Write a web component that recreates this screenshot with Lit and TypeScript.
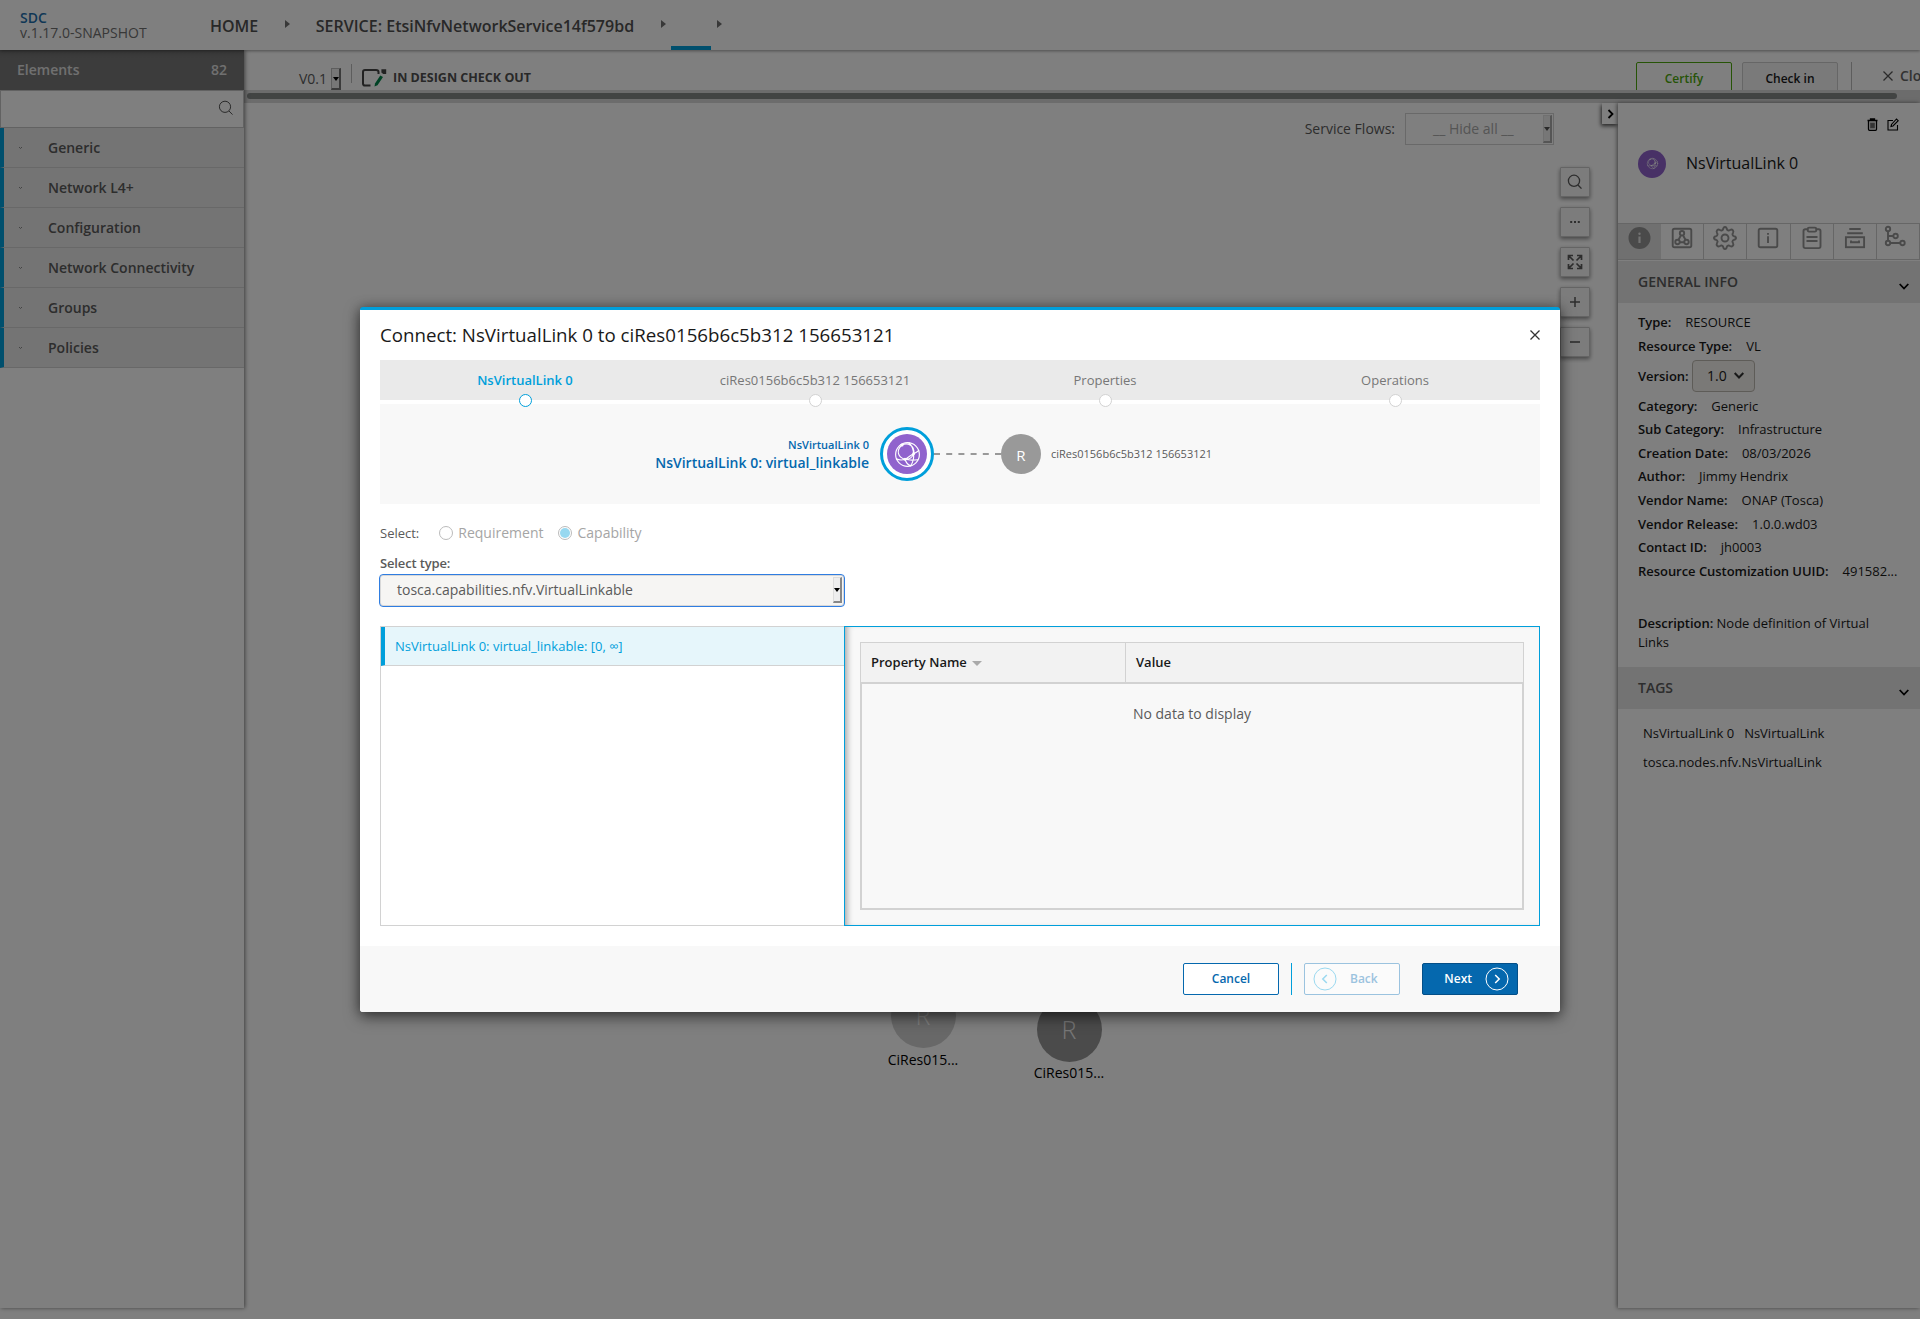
import { LitElement, html, css, svg } from "lit";
import { customElement } from "lit/decorators.js";

const categories = ["Generic", "Network L4+", "Configuration", "Network Connectivity", "Groups", "Policies"];

const details: [string, string][] = [
  ["Category:", "Generic"],
  ["Sub Category:", "Infrastructure"],
  ["Creation Date:", "08/03/2026"],
  ["Author:", "Jimmy Hendrix"],
  ["Vendor Name:", "ONAP (Tosca)"],
  ["Vendor Release:", "1.0.0.wd03"],
  ["Contact ID:", "jh0003"],
  ["Resource Customization UUID:", "491582..."],
];

const steps = ["NsVirtualLink 0", "ciRes0156b6c5b312 156653121", "Properties", "Operations"];

const globe = svg`<g fill="none" stroke="#fff" stroke-width="1.100" stroke-linecap="round">
  <circle cx="12" cy="12" r="11.400"/>
  <path d="M6.700 2.900C12 0 19.500 3.500 17.900 11.200C16.500 15.500 13 16.800 9.600 16.600M6.700 2.900C.500 8.500 3 15 9.600 16.600M1.300 16.200C4 17.500 7 17.500 9.600 16.600M9.600 16.600C13 17.500 18 17.500 22 17M9.600 16.600C10.500 19.500 12.500 22 15 22.900M17.900 11.200C18.300 16 17 20 15 22.900M17.900 11.200C17.500 6.500 16 3 13.500.900M17.900 11.200C19.500 10.500 21.500 9.300 22.800 8.200M9.600 16.600C13 14.500 15.500 12.500 17.900 11.200"/>
</g><g fill="#fff"><circle cx="6.700" cy="2.900" r="1.500"/><circle cx="9.600" cy="16.600" r="1.500"/><circle cx="17.900" cy="11.200" r="1.400"/></g>`;

const tabIcons = [
  svg`<circle cx="11.500" cy="12" r="11" fill="#949494" stroke="none"/><path d="M11.500 10.500v6.500" stroke="#e6e6e6" stroke-width="2.200"/><circle cx="11.500" cy="7.700" r="1.200" fill="#e6e6e6" stroke="none"/>`,
  svg`<rect x="2.700" y="2.700" width="18.600" height="18.600" rx="1.800"/><circle cx="12" cy="7.200" r="2.200"/><circle cx="7.500" cy="16" r="2.200"/><circle cx="16.500" cy="16" r="2.200"/><path d="M11 9.300 8.400 14M13 9.300l2.600 4.700M9.700 16.200h4.600"/>`,
  svg`<circle cx="12" cy="12" r="3.500"/><path d="M10.200 3.100C10.600.300 13.400.300 13.800 3.100Q14.100 4.300 15.300 4.500Q16 4.700 17.100 4C19.200 2.800 21.200 4.800 20 6.900Q19.300 8 19.500 8.700Q19.700 9.900 20.900 10.200C23.700 10.600 23.700 13.400 20.900 13.800Q19.700 14.100 19.500 15.300Q19.300 16 20 17.100C21.200 19.200 19.200 21.200 17.100 20Q16 19.300 15.300 19.500Q14.100 19.700 13.800 20.900C13.400 23.700 10.600 23.700 10.200 20.900Q9.900 19.700 8.700 19.500Q8 19.300 6.900 20C4.800 21.200 2.800 19.200 4 17.100Q4.700 16 4.500 15.300Q4.300 14.100 3.100 13.800C.300 13.400.300 10.600 3.100 10.200Q4.300 9.900 4.500 8.700Q4.700 8 4 6.900C2.800 4.800 4.800 2.800 6.900 4Q8 4.700 8.700 4.500Q9.900 4.300 10.200 3.100Z"/>`,
  svg`<rect x="2.700" y="2.700" width="18.600" height="18.600" rx="1.800"/><path d="M12 10.200v6.800M12 7v1.700"/>`,
  svg`<path d="M8 3.300H5.300a1.800 1.800 0 0 0-1.800 1.800v15.200a1.800 1.800 0 0 0 1.800 1.800h13.400a1.800 1.800 0 0 0 1.800-1.800V5.100a1.800 1.800 0 0 0-1.800-1.800H16"/><rect x="7.800" y="1.600" width="8.400" height="4" rx="1.200"/><path d="M6.500 11h11M6.500 15h11"/>`,
  svg`<path d="M6.300 3h11.400M4.200 7.200h15.600"/><rect x="2.900" y="11.200" width="18.200" height="10"/><path d="M8 14.500v1.800h8v-1.800"/>`,
  svg`<circle cx="5" cy="3" r="2.200"/><circle cx="12.600" cy="10" r="2.200"/><circle cx="5" cy="17" r="2.200"/><circle cx="19.500" cy="17" r="2.200"/><path d="M5 5.200v9.600M5 10h5.400M7.200 17h10"/>`,
];

const search = svg`<circle cx="7" cy="6.800" r="5.600"/><path d="M11 11l3.500 3.600"/>`;
const toolIcons = [
  svg`<g stroke-width="1.300">${search}</g>`,
  svg`<path d="M3.200 8h2M7 8h2M10.800 8h2" stroke-width="2"/>`,
  svg`<path d="M1.500 6V1.500H6M10 1.500h4.500V6M14.500 10v4.500H10M6 14.500H1.500V10M2 2l4.500 4.500M14 2 9.500 6.500M14 14 9.500 9.500M2 14l4.500-4.500" stroke-width="1.700"/>`,
  svg`<path d="M8 3v10M3 8h10" stroke-width="1.500"/>`,
  svg`<path d="M3 8h10" stroke-width="1.600"/>`,
];

@customElement("app-root")
export class AppRoot extends LitElement {
  static styles = css`
    :host { display: block; position: relative; width: 1920px; height: 1319px; overflow: hidden; background: #fff; color: #191919; font: 400 14px/20px "Open Sans", "Noto Sans", sans-serif; }
    *, *::before { box-sizing: border-box; }
    svg { display: block; flex: none; overflow: visible; }
    .page { display: flex; flex-direction: column; height: 1308px; }
    .top { height: 50px; flex: none; display: flex; position: relative; z-index: 3; background: #fff; box-shadow: 0 1px 3px rgba(0,0,0,.4); color: #5a5a5a; }
    .brand { width: 190px; padding: 10px 0 0 20px; line-height: 15px; font-size: 14px; font-weight: 500; color: #707070; }
    .brand b { display: block; font-weight: 600; color: #1e6fad; }
    .crumbs { display: flex; align-items: center; font-size: 16px; font-weight: 600; padding: 2px 0 0 20px; color: #505050; }
    .crumbs i { width: 0; height: 0; border: 4.500px solid transparent; border-left: 5px solid #707070; border-right: 0; margin: 0 25.500px 4px 27px; }
    .crumbs u { width: 40px; height: 4px; background: #009fdb; align-self: flex-end; margin-left: -20.500px; }
    .crumbs u + i { margin-left: 6px; }
    .main { flex: 1; min-height: 0; display: flex; }
    .palette { width: 244px; flex: none; position: relative; z-index: 2; box-shadow: 1px 0 4px rgba(0,0,0,.5); }
    .phead { height: 40px; background: linear-gradient(#6e6e6e,#787878 8px); display: flex; justify-content: space-between; padding: 10px 17px; color: #e0e0e0; font-weight: 600; }
    .find { height: 38px; border: 1px solid #c4c4c4; display: flex; justify-content: flex-end; padding: 9px 9px; }
    .find svg, .tool svg { fill: none; stroke: #555; }
    .cat { height: 40px; display: flex; align-items: center; gap: 25px; padding-left: 14px; border-left: 4px solid #009fdb; border-bottom: 1px solid #d0d0d0; background: #e8e8e8; font-weight: 600; color: #5a5a5a; }
    .cat svg { fill: none; stroke: #888; }
    .work { flex: 1; min-width: 0; display: flex; flex-direction: column; }
    .bar { height: 40px; flex: none; overflow: hidden; display: flex; align-items: flex-start; padding-left: 55px; }
    .ver { display: flex; align-items: center; height: 22px; margin-top: 18px; gap: 4px; color: #5a5a5a; }
    .spin { width: 10px; align-self: stretch; background: #eee; border: 1px solid #bbb; border-right: 2px solid #777; border-bottom: 2px solid #777; display: grid; place-items: center; }
    .spin::before { content: ""; border: 3px solid transparent; border-top: 4px solid #000; border-bottom: 0; }
    .sep { width: 1px; height: 19px; margin: 14px 10px 0 10px; background: #bbb; }
    .state { display: flex; align-items: center; gap: 6px; font-size: 12.500px; font-weight: 700; color: #505050; margin-top: 18px; height: 20px; }
    .acts { margin-left: auto; display: flex; width: 284px; }
    .act { flex: none; width: 96px; height: 32px; margin: 12px 10px 0 0; border: 1px solid #ccc; border-radius: 2px; background: #f4f4f4; font-size: 12px; font-weight: 600; text-align: center; line-height: 31px; }
    .act.ok { border-color: #4ca90c; color: #4ca90c; background: #fff; }
    .exit { display: flex; flex: none; align-items: center; gap: 7px; height: 30px; margin: 12px 0 0 3px; padding: 0 0 2px 31px; border-left: 1px solid #bbb; color: #666; font-weight: 600; }
    .track { height: 13px; flex: none; background: #d8d8d8; padding: 3px 23px 0 3px; }
    .track div { height: 6px; border-radius: 3px; background: #848887; }
    .split { flex: 1; min-height: 0; display: flex; }
    .canvas { flex: 1; position: relative; }
    .flows { display: flex; align-items: center; justify-content: flex-end; padding: 10px 64px 0 0; gap: 10px; color: #5a5a5a; }
    .hide { width: 149px; height: 32px; border: 1px solid #d2d2d2; display: flex; justify-content: space-between; align-items: center; padding: 1px 1px 1px 27px; color: #aaa; }
    .flows .spin { width: 9px; border-color: #e0e0e0 #aaa #aaa #e0e0e0; }
    .flows .spin::before { border-top-color: #555; }
    .tools { position: absolute; top: 64px; left: 1316px; display: grid; gap: 10px; }
    .tool { width: 30px; height: 30px; display: grid; place-items: center; border: 1px solid #c8c8c8; border-radius: 1px; background: #f8f8f8; box-shadow: 0 2px 4px rgba(0,0,0,.45); }
    .tool svg { stroke: #5a5a5a; }
    .fold { position: absolute; top: 0; right: 0; width: 16px; height: 21px; background: #fff; box-shadow: -1px 2px 4px rgba(0,0,0,.7); display: grid; place-items: center; }
    .fold svg, .chev { fill: none; stroke: #000; stroke-width: 1.800; }
    .node { position: absolute; width: 120px; text-align: center; color: #000; font-size: 14px; top: 880px; left: 619px; }
    .node.b { left: 765px; top: 893.500px; }
    .node span { display: block; width: 65px; height: 65px; border-radius: 50%; background: #d0d0d0; color: #fff; margin: 0 auto 1.500px; line-height: 65px; font-size: 25px; font-weight: 300; }
    .node.b span { background: #969696; color: #eee; }
    .info { width: 302px; flex: none; position: relative; z-index: 1; background: #fff; box-shadow: -1px 0 4px rgba(0,0,0,.5); font-size: 13px; line-height: 18.570px; }
    .icons { display: flex; justify-content: flex-end; gap: 9px; padding: 15px 21px 0 0; height: 39px; }
    .icons svg { fill: none; stroke: #000; stroke-width: 1.300; }
    .who { display: flex; align-items: center; gap: 20px; height: 81px; padding: 0 0 38px 20px; font-size: 16px; }
    .badge { width: 28px; height: 28px; border-radius: 50%; background: #9063cd; display: grid; place-items: center; }
    .tabs { display: grid; grid-template-columns: repeat(7, 1fr); height: 37px; border-top: 1px solid #ccc; border-bottom: 1px solid #ccc; }
    .tab { border-right: 1px solid #ccc; display: flex; justify-content: center; padding-top: 2px; }
    .tab svg { fill: none; stroke: #949494; stroke-width: 1.900; }
    .tab:first-child { background: #e0e0e0; border: 0; }
    .tab:last-child { padding-right: 6px; }
    .sect { height: 42px; display: flex; align-items: center; justify-content: space-between; background: #e6e6e6; padding: 0 11px 0 20px; font-size: 14px; font-weight: 600; color: #5a5a5a; }
    .sect.first { margin-top: 1px; }
    .sect .chev { margin-top: 8px; }
    .list { padding: 7.500px 20px 0; height: 364px; }
    .row { height: 23.620px; display: flex; align-items: center; gap: 14px; }
    .row b, .desc b { font-weight: 600; letter-spacing: -.04px; }
    .row.v { height: 36.400px; gap: 3.500px; }
    .pick { width: 63px; height: 32px; border: 1px solid #bcb8b0; border-radius: 4px; background: #f5f3ef; display: flex; align-items: center; gap: 7px; padding-left: 14px; font-size: 14px; }
    .pick .chev { stroke: #333; stroke-width: 2; }
    .desc { margin: 31.400px 0 0; width: 245px; line-height: 18.570px; }
    .tags { padding: 10px 25px; display: flex; flex-wrap: wrap; gap: 0 10px; line-height: 29px; }
    .veil { position: absolute; inset: 0; z-index: 10; background: rgba(0,0,0,.5); }
    .modal { position: absolute; z-index: 11; left: 360px; top: 307px; width: 1200px; height: 705px; display: flex; flex-direction: column; border-top: 3px solid #009fdb; border-radius: 3px; background: #fff; box-shadow: 0 5px 15px rgba(0,0,0,.5), 0 0 12px rgba(0,0,0,.3); }
    .title { height: 50px; flex: none; display: flex; align-items: center; justify-content: space-between; padding: 0 20px; font-size: 18.720px; font-weight: 500; }
    .steps { display: grid; grid-template-columns: repeat(4, 1fr); height: 44px; flex: none; margin: 0 20px; background: #eaeaea; border-bottom: 4px solid #fff; font-size: 13px; color: #777; position: relative; }
    .step { display: flex; flex-direction: column; align-items: center; padding-top: 10px; gap: 4px; height: 47px; }
    .step i { width: 13px; height: 13px; border: 1px solid #d2d2d2; border-radius: 50%; background: #fff; flex: none; }
    .step.on { color: #009fdb; font-weight: 600; }
    .step.on i { border: 1.500px solid #009fdb; }
    .link { height: 100px; flex: none; margin: 0 20px; background: #f8f8f8; display: flex; align-items: center; font-size: 11px; font-weight: 500; color: #5a5a5a; }
    .from { width: 489px; text-align: right; color: #0568ae; font-weight: 600; line-height: 18px; padding-bottom: 1px; }
    .from b { display: block; font-size: 14px; font-weight: 600; }
    .ring { width: 54px; height: 54px; margin-left: 11px; border: 3px solid #009fdb; border-radius: 50%; background: #fff; display: grid; place-items: center; }
    .ring .badge { width: 40px; height: 40px; }
    .r { width: 40px; height: 40px; border-radius: 50%; background: #999; color: #fff; display: grid; place-items: center; font-size: 15px; font-weight: 400; margin-right: 10px; padding-top: 1px; }
    .choose { display: flex; align-items: center; margin: 19px 20px 0; height: 20px; font-size: 13px; color: #5a5a5a; }
    .radio { display: flex; align-items: center; gap: 5px; font-size: 14px; color: #a5a5a5; margin-left: 20px; }
    .radio + .radio { margin-left: 15px; }
    .radio i { width: 14px; height: 14px; border: 1px solid #bbb; border-radius: 50%; padding: 1px; }
    .radio i::before { content: ""; display: block; width: 10px; height: 10px; border-radius: 50%; }
    .radio.on i::before { background: #97d8f0; }
    .lbl { margin: 10px 20px 0; font-size: 13px; font-weight: 600; letter-spacing: -.15px; color: #5a5a5a; }
    .sel { width: 466px; height: 33px; flex: none; margin: 1px 0 0 19px; border: 1px solid #2f7de1; border-radius: 4px; background: #f6f5f3; box-shadow: inset 0 0 0 1px #d8d8d8; display: flex; justify-content: space-between; align-items: center; padding: 2px 2px 3px 17px; color: #5a5a5a; }
    .sel .spin { width: 9px; border-color: #ddd #888 #888 #ddd; }
    .panes { display: flex; height: 300px; flex: none; margin: 19px 20px 0; }
    .left { width: 464px; border: 1px solid #d2d2d2; border-right: 0; }
    .item { height: 39px; display: flex; align-items: center; padding-left: 10px; border-left: 4px solid #009fdb; border-bottom: 1px solid #d2d2d2; background: #e6f6fb; color: #009fdb; font-size: 13px; }
    .right { flex: 1; border: 1px solid #009fdb; background: #f8f8f8; padding: 15px; box-shadow: inset 6px 0 6px -4px rgba(0,0,0,.35); }
    .thead { display: flex; height: 40px; border: 1px solid #d2d2d2; border-bottom: 0; background: #f2f2f2; font-size: 13px; font-weight: 600; line-height: 37px; }
    .thead div { width: 265px; height: 39px; border-right: 1px solid #d2d2d2; padding: 0 0 1px 10px; display: flex; align-items: center; gap: 5px; }
    .thead div:last-child { border: 0; }
    .thead i { border: 5px solid transparent; border-top: 5px solid #aaa; border-bottom: 0; margin-top: 2px; }
    .tbody { height: 228px; border: 2px solid #d2d2d2; padding-top: 20px; text-align: center; color: #5a5a5a; }
    .foot { margin-top: auto; height: 66px; background: #f8f8f8; border-radius: 0 0 3px 3px; display: flex; align-items: center; justify-content: flex-end; padding-right: 42px; }
    .btn { width: 96px; height: 32px; border: 1px solid #0568ae; border-radius: 2px; background: #fff; display: flex; align-items: center; justify-content: center; font-size: 12px; font-weight: 600; color: #0568ae; }
    .btn svg { fill: none; stroke: currentColor; }
    .bsep { width: 1px; height: 32px; margin: 0 12px; background: #009fdb; }
    .back { border-color: #9bc3df; color: #9bc3df; background: #fbfbfb; justify-content: flex-start; padding-left: 8px; gap: 13px; }
    .back svg { color: #9bd9f0; }
    .next { margin-left: 22px; background: #0568ae; border-color: #044f88; color: #fff; gap: 13px; justify-content: flex-end; padding-right: 8px; }
  `;

  private chevron() {
    return html`<svg class="chev" width="10" height="7" viewBox="0 0 10 7"><path d="M.700 1 5 5.500 9.300 1"/></svg>`;
  }

  private cross(size: number, color: string) {
    return html`<svg width=${size} height=${size} viewBox="0 0 10 10" fill="none" stroke=${color} stroke-width="1.300"><path d="M.500.500l9 9M9.500.500l-9 9"/></svg>`;
  }

  private palette() {
    return html`<div class="palette">
      <div class="phead"><span>Elements</span><span>82</span></div>
      <div class="find"><svg width="16" height="16" viewBox="0 0 16 16">${search}</svg></div>
      ${categories.map(c => html`<div class="cat"><svg width="5" height="4" viewBox="0 0 5 4"><path d="M1 1l1.500 1.500L4 1"/></svg>${c}</div>`)}
    </div>`;
  }

  private info() {
    return html`<div class="info">
      <div class="icons">
        <svg width="11" height="13" viewBox="0 0 11 13"><path d="M.500 2.500h10M3.500 2.300V1h4v1.300M1.500 2.500v8.800q0 1 1 1h6q1 0 1-1V2.500"/><rect x="3.500" y="5" width="4" height="5" fill="#666" stroke="#777" stroke-width=".800"/></svg>
        <svg width="12" height="13" viewBox="0 0 12 13"><path d="M6 2.500H1v9.500h9.500V7M4 8.500l.500-2L9.500 1l1.700 1.700L6 8z" stroke-width="1.100"/></svg>
      </div>
      <div class="who"><span class="badge"><svg width="11" height="11" viewBox="0 0 24 24">${globe}</svg></span>NsVirtualLink 0</div>
      <div class="tabs">${tabIcons.map(t => html`<div class="tab"><svg width="24" height="24" viewBox="0 0 24 24">${t}</svg></div>`)}</div>
      <div class="sect first">GENERAL INFO${this.chevron()}</div>
      <div class="list">
        <div class="row"><b>Type:</b><span>RESOURCE</span></div>
        <div class="row"><b>Resource Type:</b><span>VL</span></div>
        <div class="row v"><b>Version:</b><span class="pick">1.0 ${this.chevron()}</span></div>
        ${details.map(([k, v]) => html`<div class="row"><b>${k}</b><span>${v}</span></div>`)}
        <div class="desc"><b>Description:</b> Node definition of Virtual Links</div>
      </div>
      <div class="sect">TAGS${this.chevron()}</div>
      <div class="tags"><span>NsVirtualLink 0</span><span>NsVirtualLink</span><span>tosca.nodes.nfv.NsVirtualLink</span></div>
    </div>`;
  }

  private modal() {
    return html`<div class="modal">
      <div class="title"><span>Connect: NsVirtualLink 0 to ciRes0156b6c5b312 156653121</span>${this.cross(10, "#333")}</div>
      <div class="steps">${steps.map((s, i) => html`<div class="step ${i === 0 ? "on" : ""}"><span>${s}</span><i></i></div>`)}</div>
      <div class="link">
        <div class="from">NsVirtualLink 0<b>NsVirtualLink 0: virtual_linkable</b></div>
        <div class="ring"><span class="badge"><svg width="25" height="25" viewBox="0 0 24 24">${globe}</svg></span></div>
        <svg width="67" height="2" viewBox="0 0 67 2"><path d="M0 1h67" stroke="#999" stroke-width="2" stroke-dasharray="6 6.200"/></svg>
        <span class="r">R</span>ciRes0156b6c5b312 156653121
      </div>
      <div class="choose">Select:<span class="radio"><i></i>Requirement</span><span class="radio on"><i></i>Capability</span></div>
      <div class="lbl">Select type:</div>
      <div class="sel">tosca.capabilities.nfv.VirtualLinkable<span class="spin"></span></div>
      <div class="panes">
        <div class="left"><div class="item">NsVirtualLink 0: virtual_linkable: [0, ∞]</div></div>
        <div class="right">
          <div class="thead"><div>Property Name <i></i></div><div>Value</div></div>
          <div class="tbody">No data to display</div>
        </div>
      </div>
      <div class="foot">
        <div class="btn">Cancel</div><span class="bsep"></span>
        <div class="btn back"><svg width="24" height="24" viewBox="0 0 24 24"><circle cx="12" cy="12" r="11"/><path d="M13.800 8l-4 4 4 4" stroke-width="1.500"/></svg>Back</div>
        <div class="btn next">Next<svg width="24" height="24" viewBox="0 0 24 24"><circle cx="12" cy="12" r="11"/><path d="M10.200 8l4 4-4 4" stroke-width="1.500"/></svg></div>
      </div>
    </div>`;
  }

  render() {
    return html`<div class="page">
        <div class="top">
          <div class="brand"><b>SDC</b>v.1.17.0-SNAPSHOT</div>
          <div class="crumbs">HOME<i></i>SERVICE: EtsiNfvNetworkService14f579bd<i></i><u></u><i></i></div>
        </div>
        <div class="main">
          ${this.palette()}
          <div class="work">
            <div class="bar">
              <div class="ver">V0.1<span class="spin"></span></div><div class="sep"></div>
              <div class="state"><svg width="25" height="18" viewBox="0 0 25 18" fill="none"><path d="M8.500 16.600H3Q1 16.600 1 14.500V3Q1 1 3 1H14Q16.500 1 16.500 3V5" stroke="#444" stroke-width="2"/><path d="M18.300 6.500 21 8 15.500 16.300 12.500 17.500 13 14.500z" fill="#00854a"/><path d="M19.400.300h4.800V5h-3l-1.800-1.500z" fill="#444"/></svg>IN DESIGN CHECK OUT</div>
              <div class="acts"><div class="act ok">Certify</div><div class="act">Check in</div><div class="exit">${this.cross(10, "#555")}<span>Close</span></div></div>
            </div>
            <div class="track"><div></div></div>
            <div class="split">
              <div class="canvas">
                <div class="flows">Service Flows:<span class="hide">__ Hide all __<span class="spin"></span></span></div>
                <div class="tools">${toolIcons.map(t => html`<div class="tool"><svg width="16" height="16" viewBox="0 0 16 16">${t}</svg></div>`)}</div>
                <div class="fold"><svg width="7" height="10" viewBox="0 0 7 10"><path d="M1.500 1 5.500 5l-4 4"/></svg></div>
                <div class="node"><span>R</span>CiRes015...</div>
                <div class="node b"><span>R</span>CiRes015...</div>
              </div>
              ${this.info()}
            </div>
          </div>
        </div>
      </div>
      <div class="veil"></div>
      ${this.modal()}`;
  }
}
